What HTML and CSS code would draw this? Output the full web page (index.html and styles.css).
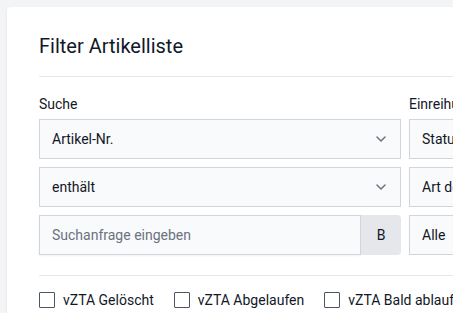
FILE: index.html
```html
<!DOCTYPE html>
<html lang="de">
<head>
<meta charset="utf-8">
<link rel="stylesheet" href="styles.css">
</head>
<body>
<div class="page">
  <div class="card">
    <h1 class="title">Filter Artikelliste</h1>
    <div class="divider"></div>
    <div class="grid">
      <div class="col">
        <div class="label">Suche</div>
        <div class="select"><span>Artikel-Nr.</span><svg class="chev" width="10" height="6" viewBox="0 0 10 6"><path d="M1 1l4 4 4-4" fill="none" stroke="#6b7280" stroke-width="1.5" stroke-linecap="round" stroke-linejoin="round"/></svg></div>
        <div class="select"><span>enthält</span><svg class="chev" width="10" height="6" viewBox="0 0 10 6"><path d="M1 1l4 4 4-4" fill="none" stroke="#6b7280" stroke-width="1.5" stroke-linecap="round" stroke-linejoin="round"/></svg></div>
        <div class="search">
          <div class="search-input">Suchanfrage eingeben</div>
          <div class="search-btn">B</div>
        </div>
      </div>
      <div class="col">
        <div class="label">Einreihung</div>
        <div class="select"><span>Status</span></div>
        <div class="select"><span>Art der Einreihung</span></div>
        <div class="select"><span>Alle</span></div>
      </div>
    </div>
    <div class="divider divider-2"></div>
    <div class="checks">
      <label class="check"><span class="box"></span>vZTA Gelöscht</label>
      <label class="check"><span class="box"></span>vZTA Abgelaufen</label>
      <label class="check"><span class="box"></span>vZTA Bald ablaufend</label>
    </div>
  </div>
</div>
</body>
</html>
```

FILE: styles.css
```css
html, body {
  margin: 0;
  padding: 0;
  overflow: hidden;
  background: #f3f4f6;
  font-family: Roboto, "Liberation Sans", Arial, sans-serif;
  color: #111827;
}
.page {
  padding: 7px 0 0 7px;
  width: 1000px;
}
.card {
  background: #fff;
  border-radius: 4px;
  box-shadow: 0 1px 3px rgba(0,0,0,0.08);
  padding: 25px 32px 40px 32px;
  width: 800px;
}
.title {
  margin: 0;
  font-size: 20px;
  font-weight: 400;
  line-height: 28px;
  color: #111827;
}
.divider {
  height: 1px;
  background: #e5e7eb;
  margin-top: 16px;
}
.grid {
  display: grid;
  grid-template-columns: 362px 362px;
  column-gap: 8px;
  margin-top: 17px;
}
.col {
  display: flex;
  flex-direction: column;
  gap: 8px;
}
.label {
  font-size: 14px;
  line-height: 20px;
  margin-bottom: -3px;
}
.select {
  height: 40px;
  box-sizing: border-box;
  border: 1px solid #d1d5db;
  background: #f9fafb;
  display: flex;
  align-items: center;
  justify-content: space-between;
  padding: 0 14px 0 12px;
  font-size: 14px;
}
.chev {
  display: block;
}
.search {
  display: flex;
  height: 40px;
}
.search-input {
  flex: 1;
  box-sizing: border-box;
  border: 1px solid #d1d5db;
  background: #f9fafb;
  display: flex;
  align-items: center;
  padding: 0 12px;
  font-size: 14px;
  color: #6b7280;
  box-shadow: 0 1px 2px rgba(0,0,0,0.05);
}
.search-btn {
  width: 40px;
  background: #e5e7eb;
  border-radius: 0 4px 4px 0;
  display: flex;
  align-items: center;
  justify-content: center;
  font-size: 14px;
}
.divider-2 {
  margin-top: 20px;
}
.checks {
  display: flex;
  gap: 20px;
  margin-top: 16px;
}
.check {
  display: flex;
  align-items: center;
  gap: 8px;
  font-size: 14px;
  line-height: 16px;
  white-space: nowrap;
}
.box {
  width: 16px;
  height: 16px;
  box-sizing: border-box;
  border: 1px solid #4b5563;
  border-radius: 1px;
  background: #fff;
}
```
